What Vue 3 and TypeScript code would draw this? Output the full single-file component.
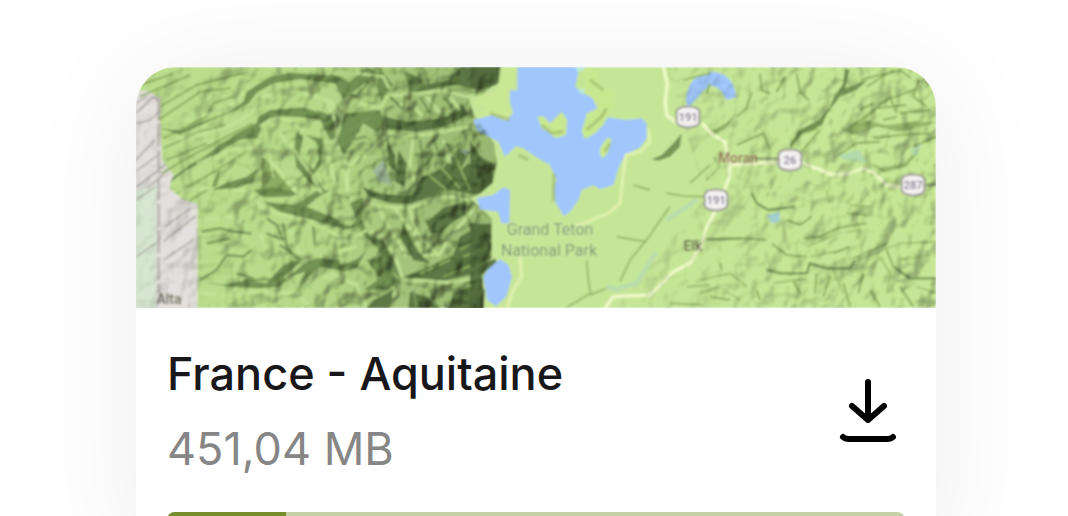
<script setup lang="ts">
interface Shield {
  x: number
  y: number
  label: string
}

const region = { name: 'France - Aquitaine', size: '451,04 MB', progress: 16.1 }

const shields: Shield[] = [
  { x: 552, y: 50, label: '191' },
  { x: 580, y: 133, label: '191' },
  { x: 654, y: 93, label: '26' },
  { x: 777, y: 118, label: '287' },
]
</script>

<template>
  <main class="page">
    <article class="card">
      <svg class="map" viewBox="0 0 800 241" preserveAspectRatio="xMidYMid slice" role="img" aria-label="Terrain map">
        <defs>
          <filter id="soft" x="0" y="0" width="100%" height="100%">
            <feGaussianBlur stdDeviation="0.9" />
          </filter>
          <filter id="relief" x="0" y="0" width="100%" height="100%" color-interpolation-filters="sRGB">
            <feTurbulence type="fractalNoise" baseFrequency="0.04 0.035" numOctaves="3" seed="12" />
            <feColorMatrix type="matrix" values="0 0 0 0 0  0 0 0 0 0  0 0 0 0 0  1 0 0 0 0" />
            <feDiffuseLighting surfaceScale="13" lighting-color="#f4ffe0" diffuseConstant="1.3">
              <feDistantLight azimuth="225" elevation="52" />
            </feDiffuseLighting>
          </filter>
          <linearGradient id="reliefFade">
            <stop offset="0" stop-color="#fff" stop-opacity="0.08" />
            <stop offset="0.12" stop-color="#fff" stop-opacity="0.25" />
            <stop offset="0.3" stop-color="#fff" stop-opacity="0.45" />
            <stop offset="0.46" stop-color="#fff" stop-opacity="0.55" />
            <stop offset="0.48" stop-color="#fff" stop-opacity="0.05" />
            <stop offset="0.7" stop-color="#fff" stop-opacity="0.12" />
            <stop offset="0.85" stop-color="#fff" stop-opacity="0.25" />
            <stop offset="1" stop-color="#fff" stop-opacity="0.3" />
          </linearGradient>
          <linearGradient id="range" gradientUnits="userSpaceOnUse" x1="0" y1="0" x2="364" y2="0">
            <stop offset="0" stop-color="#bddf8e" />
            <stop offset="0.5" stop-color="#b7d98a" />
            <stop offset="0.72" stop-color="#a5c47c" />
            <stop offset="1" stop-color="#98b672" />
          </linearGradient>
          <mask id="reliefMask"><rect width="800" height="241" fill="url(#reliefFade)" /></mask>
          <path id="rangeShape" d="M0 0H364L358 18 346 28 333 31 338 48 347 60 358 76 361 96 357 115 344 127 334 131 348 144 356 152 356 190 347 210 348 241H0Z" />
          <clipPath id="reliefClip">
            <use href="#rangeShape" />
            <path d="M530 0H800V241H480L570 130Z" />
          </clipPath>
        </defs>

        <g filter="url(#soft)">
          <rect width="800" height="241" fill="#c6e697" />
          <use href="#rangeShape" fill="url(#range)" />

          <!-- western slopes -->
          <g transform="translate(-6 -7) scale(0.3333)">
            <path fill="#e4e0df" d="M0 95 60 92 82 115 92 200 96 300 130 345 118 385 160 420 203 432V760H0Z" />
            <path fill="#d6e6d2" d="M0 395 80 375V760H0Z" />
            <path class="ridge" stroke="#c2bbb8" stroke-width="10" stroke-dasharray="70 10" d="M86 110V700" />
            <path class="ridge" stroke="#b1b0aa" stroke-width="5" d="M18 130 50 110M18 160 70 110 84 122M18 190 60 180 92 150M18 300 75 240M18 335 90 280M20 380 60 350 105 315M50 385 100 345M20 420 75 380M105 500 180 445M100 545 195 470M100 600 190 540M20 590 75 550" />
            <path class="ridge mid" d="M20 80 130 40M30 110 180 45M90 140 200 75 340 40M85 180 190 110 210 95 300 85M100 235 230 170 250 130 310 110M100 265 210 215 290 195M110 300 230 250M95 340 180 290 280 235 370 190M140 400 260 330 350 275M180 420 260 375 270 330" />
            <path class="dark" d="M90 205 150 212 230 180 300 155 340 125 350 95 420 50 480 38 630 48 628 72 510 58 430 70 380 98 355 131 310 154 240 182 150 224Z" />
            <path class="dark" d="M120 368 130 350 180 315 230 285 275 250 330 215 380 190 385 170 420 150 520 142 560 155 575 180 520 172 440 168 402 185 382 235 335 238 300 255 240 296 170 330Z" />
            <path class="dark" d="M560 150 600 165 625 160 628 235 600 240 580 200ZM500 215 520 232 508 285 550 330 565 300 563 250 530 225 580 238 574 315 550 345 590 400 540 370 500 320 492 275Z" />
            <path class="ridge light" d="M120 195 240 160 320 125 350 80M150 238 280 205 350 170 405 110 500 92 590 120 618 190 618 260M200 310 320 265 385 265M390 200 420 180 480 180 530 225M420 300 470 360 510 410M430 330 455 400M140 390 230 385 345 390 395 440 450 465 530 475 630 530M210 480 300 470 350 500M480 490 490 550 530 610M390 520 410 570" />
            <path class="mid-fill" d="M395 290 420 310 490 395 440 402 380 400 395 375Z" />
            <path class="dark" d="M245 390 290 368 350 350 385 325 370 365 320 385ZM370 390 430 382 510 400 480 410 400 412ZM400 425 500 435 555 395 600 390 560 415 530 440 630 480 630 505 540 478 450 455Z" />
            <path class="ridge light" d="M440 330 510 408M415 250 430 350M470 240 540 335 575 400M450 220 520 310M590 255 610 350 630 400" />
            <path class="ridge dark-line" d="M215 515 270 505 310 515 365 520M410 475 440 495 460 540 410 520M450 555 515 600M550 500 555 555M210 660 260 630 290 585 340 590 365 570M320 640 370 655M340 660 430 658 480 625M230 550 300 535M500 470 540 460M250 380 265 335M460 490 470 560 510 610" />
            <path class="dark" d="M210 665 280 674 350 660 410 670 450 625 490 600 520 610 560 595 630 600 630 630 570 620 530 655 505 700 510 665 525 635 480 650 450 680 380 685 300 680Z" />
            <path class="ridge light" d="M210 700 300 705 390 695 500 700 540 740M520 680 560 640 630 665M465 655 515 610" />
          </g>

          <!-- central range -->
          <g transform="translate(194 -7) scale(0.3333)">
            <path class="deep" d="M390 20H510L500 75 440 90 380 75 340 80 240 105 280 75 355 60Z" />
            <path class="dark" d="M0 40 60 65 110 20 150 40 90 80 40 120ZM150 25 190 75 170 95 155 130 140 80ZM220 30 260 50 300 85 240 95ZM45 160 150 150 165 190 140 215 100 190 40 290 25 250 30 200Z" />
            <path class="deep" d="M165 170 230 185 290 180 350 170 395 130 415 160 390 180 330 205 260 215 170 208Z" />
            <path class="ridge light" d="M165 218 230 230 300 222 370 208 430 200M90 130 150 145 170 110 260 100 340 92 410 110 500 95M250 230 240 310 255 370M85 310 130 260 170 225M0 120 35 175 15 250 55 320 50 400M80 40 160 50 180 90M190 130 250 140M230 120 280 170M290 110 330 160M360 110 390 150" />
            <path class="deep" d="M205 270 230 310 225 380 195 365ZM170 230 195 290 200 340 175 315ZM275 350 340 325 385 265 420 275 390 330 450 290 490 310 488 370 440 405 360 390 300 400 245 405Z" />
            <path class="ridge mid" d="M290 340 350 390M330 320 390 385M380 300 420 390M430 310 450 380" />
            <path fill="#9bb2a1" d="M130 330 160 300 185 375 145 365ZM388 270 420 265 410 288Z" opacity="0.8" />
            <path class="deep" d="M95 380 150 400 220 408 265 400 350 395 300 412 240 432 180 430 120 410Z" />
            <path class="ridge light" d="M90 425 160 440 235 445 290 428 345 408 415 418M145 445 175 500 205 545 230 590M240 450 260 520 330 590M190 440 250 520 280 590M260 590 330 580 360 530 400 485 430 450M65 420 40 330 90 290M340 240 360 310" />
            <path class="deep" d="M290 485 345 440 410 425 405 465 370 485 330 520 300 520ZM370 585 390 530 450 495 485 490 480 590 430 605 490 605 440 640 330 665 220 650 310 615ZM220 490 260 570 300 610 250 600 210 530Z" />
            <path class="ridge mid" d="M390 570 470 520M400 590 480 560M270 640 360 600M340 650 440 610" />
            <path class="dark" d="M60 430 100 410 95 480 120 530 160 540 200 620 215 660 170 620 140 560 95 520ZM0 480 60 500 90 470 115 520 80 500 40 510ZM0 600 40 615 85 595 110 570 80 625 40 635 0 625ZM110 600 160 585 195 650 215 665 160 690 100 690 150 655Z" />
            <path class="ridge light" d="M215 660 290 662 360 668 440 655M0 640 80 675 110 740M120 515 160 530 200 600 220 665 185 710M0 540 60 545 110 510M10 580 80 560" />
            <path class="deep" d="M370 700 445 670 465 690 460 760H350ZM240 695 290 710 330 745H235ZM130 720 190 690 180 745H110Z" />
            <path class="ridge dark-line" d="M270 240 280 320 310 285M310 235 330 290M350 250 390 310M180 110 220 150 225 105M270 110 300 160 310 110M340 110 370 145M20 90 80 110 120 60M60 240 110 230M250 690 260 740M300 690 320 740M120 170 60 210" />
          </g>

          <!-- lake basin -->
          <g transform="translate(334 -7) scale(0.3333)">
            <path fill="#cae794" d="M92 20H155L110 100 120 180 20 170 60 140 10 125 40 112 85 95Z" />
            <path class="lake" d="M142 20H318L325 40 315 80 365 110 382 145 350 160 335 215 345 238 372 222 415 172 470 180 515 175 530 190 530 235 510 262 465 285 445 325 430 375 390 388 370 375 335 390 325 420 300 455 282 468 258 430 250 385 260 360 240 315 210 298 160 265 138 258 105 290 85 245 20 210 10 180 70 165 105 182 130 160 120 125 120 90 142 92Z" />
            <path class="lake" d="M20 415 70 405 100 382 120 390 118 490 95 490 85 455 30 448ZM90 598 115 615 126 650 108 710 78 738 52 720 40 650 60 620Z" />
            <path fill="#c7e88f" d="M202 170 220 168 240 190 275 155 292 180 288 225 255 235 235 215 215 205ZM325 90 350 65 330 25 380 30 390 80 430 95 425 140 400 195 375 220 345 235 335 210 355 170 380 150 385 125ZM390 265 410 235 425 235 415 275 400 295 390 285Z" />
            <path fill="#b8ead9" d="M318 20H345L338 34H320ZM320 90 345 85 340 105Z" />
            <path class="lake" d="M648 120Q655 40 730 36 792 42 798 112L768 120Q755 80 722 78 700 85 690 105L652 145Z" />
            <path fill="none" stroke="#a0bb6c" stroke-width="10" opacity="0.7" d="M215 195 245 220 280 215M350 210 395 170 410 145M405 275 420 250M252 340 250 425M145 285 175 300M120 180 60 160M360 60 400 90" />
            <path class="road" d="M580 20 592 70 586 125 590 165 620 190" />
            <path class="road faint" d="M535 205 540 245 510 275 468 285 460 340 450 430 415 460 340 490 280 510M150 590 155 650 130 690 110 745" />
            <path class="dark" d="M635 220 630 260 600 290 565 302 545 298 575 285 610 250Z" />
            <path class="mid-fill" d="M700 205 730 210 770 190 800 155 775 195 740 222Z" />
            <path class="deep" d="M0 20H92L86 68 40 90 0 80ZM0 240 25 280 66 330 66 370 30 400 0 400ZM0 490 55 492 64 560 55 600 0 620ZM0 640 75 595 80 605 35 645 40 750H0Z" opacity="0.6" />
            <path fill="none" stroke="#99ba70" stroke-width="6" d="M600 440 575 475 530 540 480 600 450 665M350 600 355 660 362 700 290 742M360 705 410 685M590 400 640 408 700 410M660 370 720 315M640 60 720 40M490 375 540 390M440 530 530 545M650 680 720 675M600 730 700 735" />
            <path fill="none" stroke="#b2d7bb" stroke-width="14" opacity="0.6" d="M680 420 590 480M560 575 530 620 500 670 430 690M410 680 450 690" />
            <path class="road" d="M405 745 430 710 540 705 575 670 610 635 660 610 690 560" />
          </g>

          <!-- eastern hills -->
          <g transform="translate(564 -7) scale(0.3333)">
            <path class="mid-fill" opacity="0.8" d="M275 240 310 205 345 190 370 170 350 210 300 225 270 270ZM425 210 490 180 560 195 640 185 710 185 670 200 600 215 530 200 460 225ZM500 305 550 325 610 310 650 280 620 320 550 338Z" />
            <path class="dark" d="M355 180 390 140 400 115 430 70 435 25 450 30 435 85 500 60 470 90 420 110 385 155 365 195 310 220 280 255 268 260 295 212Z" />
            <path class="ridge mid" d="M180 40 185 90 210 100M230 95 255 50M290 40 300 95 325 120M155 95 140 145 110 170M500 80 580 30M490 180 550 125 650 85M450 200 530 145 620 135M520 235 600 225 690 220M415 285 470 250 540 245M660 50 640 110 680 140M570 110 590 160M640 260 710 230M360 210 300 280M110 255 190 220 210 270M30 70 20 100M480 60 600 30 640 60M480 150 520 130M600 160 690 150M550 180 590 170" />
            <path class="ridge dark-line" d="M155 400 170 430 205 450 285 440M20 538 130 535M200 630 240 640 320 640 330 610 380 625 450 625 465 600M580 620 630 655 710 655" />
            <path class="ridge mid" d="M260 480 300 495 335 470M310 535 360 530 410 505 500 490M215 550 260 585 320 590M130 535 200 540M400 580 450 560M460 595 510 575 560 550M560 570 580 620M440 460 500 465M345 700 350 640M390 650 370 710M430 670 450 740M490 640 475 700M510 690 540 740M600 680 640 740M30 710 90 720M60 610 65 630M180 720 170 690M280 660 300 700" />
            <path class="ridge mid" opacity="0.6" d="M320 560 420 520 480 510M330 590 430 570M200 410 220 370M380 390 390 430M450 435 510 440M470 600 600 550 710 545M600 600 690 585M0 660 90 640 140 680M0 700 60 680 120 720M220 670 320 655M540 590 570 640 560 700M650 680 710 700M400 630 430 700M20 360 60 320 40 290" />
            <path class="ridge light" d="M320 60 380 110M390 235 450 160 520 100 600 65 680 50M200 390 260 410 330 400M350 560 440 515M480 590 540 570M370 610 460 590M30 660 100 700M400 680 410 740M610 610 690 640" />
            <path fill="#9bc9e1" d="M200 465 240 455 238 485 215 490Z" opacity="0.8" />
            <path fill="#a9d2bf" d="M415 285 480 270 500 310 430 298ZM630 270 665 250 650 290Z" opacity="0.6" />
            <path class="road" d="M5 190 40 225 75 245 80 280 90 315 88 350 70 400M92 315 235 306M300 306 350 325 390 342 440 342 490 325 520 338 560 375 610 382M45 455 20 500 0 570" />
            <path stroke="#76866a" stroke-width="5" d="M160 296H235M670 374H710" />
          </g>

          <g mask="url(#reliefMask)" class="grain">
            <g clip-path="url(#reliefClip)">
              <rect width="800" height="241" filter="url(#relief)" />
            </g>
          </g>

          <g class="park">
            <text x="414" y="168">Grand Teton</text>
            <text x="413" y="189">National Park</text>
          </g>
          <text class="town moran" x="602" y="96">Moran</text>
          <text class="town" x="557" y="184">Elk</text>
          <text class="town" x="33" y="237">Alta</text>
          <g v-for="(s, i) in shields" :key="i" :transform="`translate(${s.x} ${s.y})`">
            <path class="shield" d="M-9 -9Q0 -12 9 -9Q13 -5 11 0Q13 7 8 9Q0 12 -8 9Q-13 7 -11 0Q-13 -5 -9 -9Z" />
            <text class="route" y="4">{{ s.label }}</text>
          </g>
        </g>
      </svg>

      <div class="body">
        <div class="row">
          <div class="info">
            <h1 class="name">{{ region.name }}</h1>
            <p class="size">{{ region.size }}</p>
          </div>
          <button class="download" type="button" aria-label="Download">
            <svg width="64" height="70" viewBox="0 0 64 70" fill="none" stroke="#000" stroke-width="6" stroke-linecap="round" stroke-linejoin="round">
              <path d="M32 5V43M16 29 32 43 48 29" />
              <path d="M7 60Q9 62 13 62H51Q55 62 57 60" />
            </svg>
          </button>
        </div>
        <progress class="bar" max="100" :value="region.progress" aria-label="Download progress"></progress>
      </div>
    </article>
  </main>
</template>

<style>
body {
  background: #fff;
  overflow: hidden;
}
</style>

<style scoped>
.page {
  padding: 67px 132px 0 136px;
  font-family: Inter, "Liberation Sans", sans-serif;
}
.card {
  background: #fff;
  border-radius: 40px;
  box-shadow: 0 8px 120px rgba(0, 0, 0, 0.07);
  overflow: hidden;
}
.map {
  display: block;
  width: 100%;
  height: auto;
}
.ridge {
  fill: none;
  stroke-linejoin: round;
}
.mid {
  stroke: #8fae63;
  stroke-width: 6px;
}
.light {
  stroke: #c6e598;
  stroke-width: 10px;
  opacity: 0.8;
}
.dark-line {
  stroke: #78975a;
  stroke-width: 7px;
}
.dark {
  fill: #67864b;
  opacity: 0.85;
}
.deep {
  fill: #526a3d;
  opacity: 0.85;
}
.mid-fill {
  fill: #8dac63;
}
.lake {
  fill: #a0c6fc;
}
.road {
  fill: none;
  stroke: #effac9;
  stroke-width: 10px;
  stroke-linejoin: round;
}
.faint {
  stroke: #e0f1b0;
  stroke-width: 9px;
}
.grain {
  mix-blend-mode: multiply;
}
.park {
  font: 16px Roboto, sans-serif;
  fill: #78966b;
  stroke: #d4ebb0;
  stroke-width: 1px;
  paint-order: stroke;
  text-anchor: middle;
}
.town {
  font: 500 14px Roboto, sans-serif;
  fill: #66664f;
  text-anchor: middle;
}
.moran {
  fill: #96705a;
}
.shield {
  fill: #f3f1f0;
  stroke: #9c9c94;
  stroke-width: 2px;
}
.route {
  font: 500 11px Roboto, sans-serif;
  fill: #77708c;
  text-anchor: middle;
}
.body {
  display: flex;
  flex-direction: column;
  gap: 33px;
  padding: 36px 31px 40px;
}
.row {
  display: flex;
  align-items: center;
  justify-content: space-between;
}
.info {
  display: flex;
  flex-direction: column;
  gap: 15px;
}
.name,
.size {
  margin: 0;
  font-size: 45px;
  line-height: 60px;
}
.name {
  font-weight: 500;
  color: #18181a;
}
.size {
  font-weight: 400;
  color: #868686;
}
.download {
  display: flex;
  padding: 0;
  margin-right: 5px;
  border: 0;
  background: none;
  cursor: pointer;
}
.bar {
  display: block;
  width: 100%;
  height: 16px;
  border: 0;
  border-radius: 8px;
  overflow: hidden;
  appearance: none;
  background: #c6cfa6;
}
.bar::-webkit-progress-bar {
  background: #c6cfa6;
}
.bar::-webkit-progress-value {
  background: #758e2b;
}
</style>
